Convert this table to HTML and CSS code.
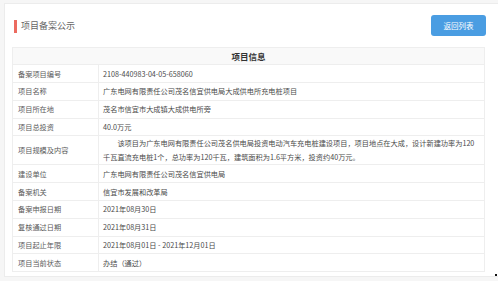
FILE: index.html
```html
<!DOCTYPE html>
<html lang="zh-CN">
<head>
<meta charset="utf-8">
<title>项目备案公示</title>
<link rel="stylesheet" href="styles.css">
</head>
<body>
<div class="panel">
  <div class="topbar">
    <div class="title"><span class="mark"></span><span class="title-text">项目备案公示</span></div>
    <a class="btn" href="#">返回列表</a>
  </div>
  <table class="info">
    <thead>
      <tr><th colspan="2">项目信息</th></tr>
    </thead>
    <tbody>
      <tr><td class="lbl">备案项目编号</td><td class="val">2108-440983-04-05-658060</td></tr>
      <tr><td class="lbl">项目名称</td><td class="val">广东电网有限责任公司茂名信宜供电局大成供电所充电桩项目</td></tr>
      <tr><td class="lbl">项目所在地</td><td class="val">茂名市信宜市大成镇大成供电所旁</td></tr>
      <tr><td class="lbl">项目总投资</td><td class="val">40.0万元</td></tr>
      <tr class="multi"><td class="lbl">项目规模及内容</td><td class="val"><p class="para">该项目为广东电网有限责任公司茂名供电局投资电动汽车充电桩建设项目，项目地点在大成，设计新建功率为120千瓦直流充电桩1个，总功率为120千瓦，建筑面积为1.6平方米，投资约40万元。</p></td></tr>
      <tr><td class="lbl">建设单位</td><td class="val">广东电网有限责任公司茂名信宜供电局</td></tr>
      <tr><td class="lbl">备案机关</td><td class="val">信宜市发展和改革局</td></tr>
      <tr><td class="lbl">备案申报日期</td><td class="val">2021年08月30日</td></tr>
      <tr><td class="lbl">复核通过日期</td><td class="val">2021年08月31日</td></tr>
      <tr><td class="lbl">项目起止年限</td><td class="val">2021年08月01日 - 2021年12月01日</td></tr>
      <tr><td class="lbl">项目当前状态</td><td class="val">办结（通过）</td></tr>
    </tbody>
  </table>
</div>
<span class="dot"></span>
</body>
</html>
```

FILE: styles.css
```css
html, body {
  margin: 0;
  padding: 0;
}
body {
  position: relative;
  background: #f6f6f6;
  font-family: "Noto Sans CJK SC", "Noto Sans", "Liberation Sans", sans-serif;
  color: #555;
  width: 498px;
  height: 281px;
  overflow: hidden;
  padding: 3px 0 0 4px;
  box-sizing: border-box;
}
.panel {
  background: #fff;
  border: 1px solid #ececec;
  border-right: none;
  height: 274px;
  box-sizing: border-box;
  padding: 11px 12px 0 7px;
}
.topbar {
  display: flex;
  justify-content: space-between;
  align-items: flex-start;
  height: 32px;
}
.title {
  display: flex;
  align-items: center;
  margin-left: 2px;
  height: 21px;
}
.mark {
  width: 3px;
  height: 13px;
  background: #ec6b60;
  margin-top: 1px;
}
.title-text {
  margin-left: 4px;
  font-size: 9px;
  color: #666;
  line-height: 13px;
}
.btn {
  display: block;
  width: 55px;
  height: 21px;
  line-height: 21px;
  text-align: center;
  background: #4a9de2;
  color: #fff;
  font-size: 7.5px;
  border-radius: 3px;
  text-decoration: none;
}
.info {
  width: 473px;
  border-collapse: collapse;
  border: 1px solid #eeeeee;
  font-size: 7.2px;
}
.info th {
  height: 16.3px;
  padding: 0;
  background: #f9f9f9;
  font-size: 8.5px;
  font-weight: bold;
  color: #333;
  border-bottom: 1px solid #eeeeee;
  text-align: center;
}
.info td {
  height: 16.8px;
  padding: 0;
  border-bottom: 1px solid #eeeeee;
  line-height: 14px;
  vertical-align: middle;
}
.lbl {
  width: 80px;
  padding-left: 5px !important;
  border-right: 1px solid #eeeeee;
  color: #5a5a5a;
}
.val {
  padding: 0 6px 0 4px !important;
  color: #4a4a4a;
}
.para {
  margin: 0;
  text-indent: 2em;
}
.dot {
  position: absolute;
  left: 495px;
  top: 274px;
  width: 2px;
  height: 2px;
  background: #111;
}
```
